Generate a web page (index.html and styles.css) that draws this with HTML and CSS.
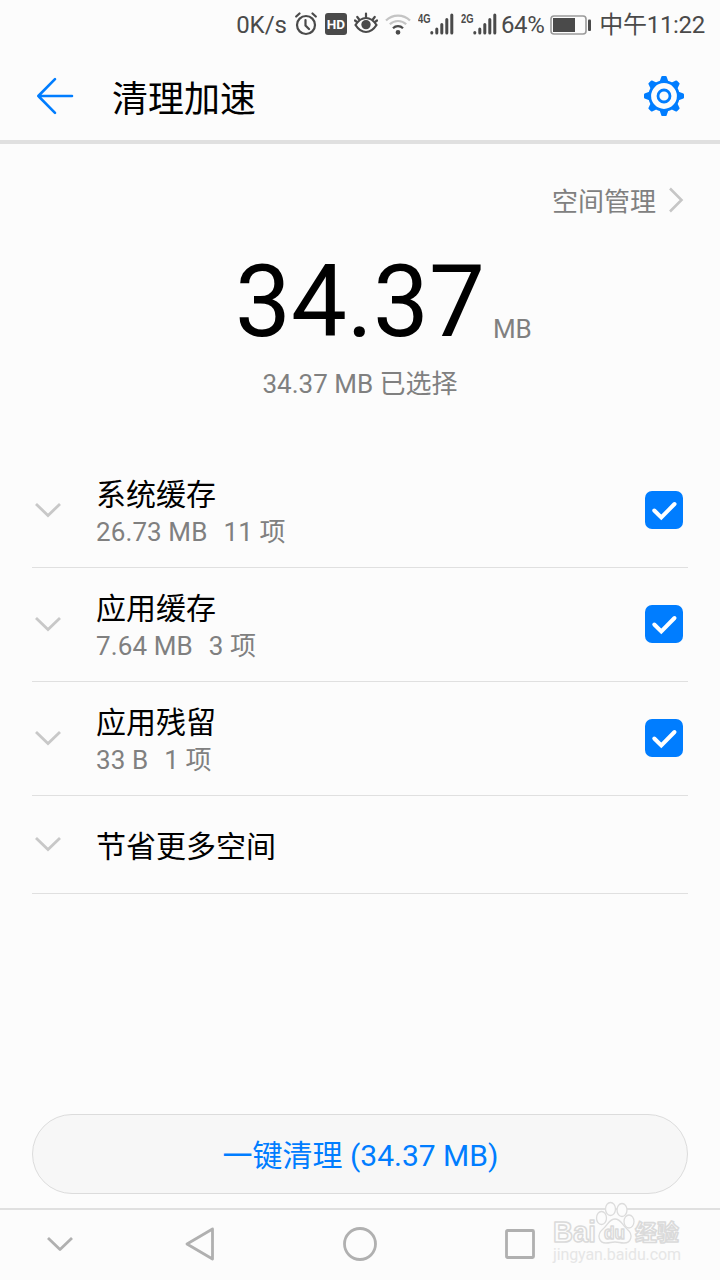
FILE: index.html
```html
<!DOCTYPE html>
<html lang="zh-CN">
<head>
    <meta charset="UTF-8">
    <meta name="viewport" content="width=device-width, initial-scale=1.0">
    <title>清理加速</title>
    <link rel="stylesheet" href="styles.css">
</head>
<body>
    <!-- Status bar -->
    <div class="status-bar">
        <span class="speed">0K/s</span>
        <svg class="icon-alarm" width="22" height="24" viewBox="0 0 22 24" fill="none" stroke="#4a4a4a" stroke-width="2.2" stroke-linecap="round">
            <circle cx="11" cy="13" r="9"/>
            <path d="M10.5 8v5.5l3.5 3.5M1.2 4.5L4.5 1.5M20.8 4.5L17.5 1.5"/>
        </svg>
        <span class="hd">HD</span>
        <svg class="icon-eye" width="24" height="22" viewBox="0 0 24 22" fill="none" stroke="#4a4a4a" stroke-width="2.2" stroke-linecap="round">
            <path d="M1.5 13Q6 6 12 6T22.5 13Q18 20 12 20T1.5 13z"/>
            <path d="M12 5.5V1.5M5.2 7.5L3.3 5M18.8 7.5L20.7 5M3 10L1 8.5M21 10L23 8.5"/>
            <circle cx="12" cy="12.6" r="3.6" fill="#4a4a4a"/>
        </svg>
        <svg class="icon-wifi" width="26" height="22" viewBox="0 0 26 22" fill="none" stroke-width="2.2">
            <path d="M1 7.5A17 17 0 0 1 25 7.5M4.8 11.3A11.8 11.8 0 0 1 21.2 11.3" stroke="#c4c4c4"/>
            <path d="M8 15.3A7 7 0 0 1 18 15.3" stroke="#4a4a4a"/>
            <circle cx="13" cy="19.3" r="1.4" stroke="#4a4a4a" fill="#4a4a4a" stroke-width="2"/>
        </svg>
        <div class="signal signal-4g">
            <span>4G</span>
            <svg width="24" height="22" viewBox="0 0 24 22" stroke="#4a4a4a" stroke-width="3" stroke-linecap="round">
                <path d="M1.8 19.5v.5M6.8 16v4M11.8 11.5v8.5M16.8 6.5v13.5M21.8 2v18"/>
            </svg>
        </div>
        <div class="signal signal-2g">
            <span>2G</span>
            <svg width="24" height="22" viewBox="0 0 24 22" stroke="#4a4a4a" stroke-width="3" stroke-linecap="round">
                <path d="M1.8 19.5v.5M6.8 16v4M11.8 11.5v8.5M16.8 6.5v13.5M21.8 2v18"/>
            </svg>
        </div>
        <span class="percent">64%</span>
        <svg class="icon-battery" width="42" height="20" viewBox="0 0 42 20">
            <rect x="1" y="1" width="35" height="18" rx="3" fill="none" stroke="#9a9a9a" stroke-width="1.6"/>
            <rect x="3" y="3" width="22" height="14" fill="#4a4a4a"/>
            <rect x="38" y="4.5" width="3" height="11.5" rx="1" fill="#4a4a4a"/>
        </svg>
        <span class="clock">中午11:22</span>
    </div>

    <!-- Header -->
    <div class="header">
        <svg width="38" height="38" viewBox="0 0 38 38" fill="none" stroke="#007dff" stroke-width="2.6" stroke-linecap="round" stroke-linejoin="round">
            <path d="M19 2.2L2.3 19L19 35.8M2.3 19H36"/>
        </svg>
        <h1>清理加速</h1>
        <svg width="40" height="40" viewBox="-20 -20 40 40" fill="none" stroke="#007dff">
            <circle r="14.3" stroke-width="2.8"/>
            <circle r="6" stroke-width="2.8"/>
            <g fill="#007dff" stroke="none">
                <path id="tooth" d="M-4.5 -14L-2.6 -19.4Q-2.3 -20 -1.6 -20H1.6Q2.3 -20 2.6 -19.4L4.5 -14z"/>
                <use href="#tooth" transform="rotate(45)"/>
                <use href="#tooth" transform="rotate(90)"/>
                <use href="#tooth" transform="rotate(135)"/>
                <use href="#tooth" transform="rotate(180)"/>
                <use href="#tooth" transform="rotate(225)"/>
                <use href="#tooth" transform="rotate(270)"/>
                <use href="#tooth" transform="rotate(315)"/>
            </g>
        </svg>
    </div>

    <div class="content">
        <div class="manage">
            <span>空间管理</span>
            <svg width="16" height="26" viewBox="0 0 16 26" fill="none" stroke="#c6c6c6" stroke-width="2.6">
                <path d="M2 1.5L13.5 13L2 24.5"/>
            </svg>
        </div>

        <div class="total">
            <span class="total-number">34.37</span>
            <span class="total-unit">MB</span>
        </div>
        <p class="selected">34.37 MB 已选择</p>

        <!-- Cache groups -->
        <div class="list">
            <div class="row">
                <svg class="chevron" viewBox="0 0 26 16"><path d="M1 2L13 13.5L25 2"/></svg>
                <div class="row-text">
                    <div class="row-title">系统缓存</div>
                    <div class="row-info"><span>26.73 MB</span><span>11 项</span></div>
                </div>
                <svg class="check" viewBox="0 0 38 38"><path d="M9.3 19.5L16.3 26.5L29.5 13"/></svg>
            </div>
            <div class="row">
                <svg class="chevron" viewBox="0 0 26 16"><path d="M1 2L13 13.5L25 2"/></svg>
                <div class="row-text">
                    <div class="row-title">应用缓存</div>
                    <div class="row-info"><span>7.64 MB</span><span>3 项</span></div>
                </div>
                <svg class="check" viewBox="0 0 38 38"><path d="M9.3 19.5L16.3 26.5L29.5 13"/></svg>
            </div>
            <div class="row">
                <svg class="chevron" viewBox="0 0 26 16"><path d="M1 2L13 13.5L25 2"/></svg>
                <div class="row-text">
                    <div class="row-title">应用残留</div>
                    <div class="row-info"><span>33 B</span><span>1 项</span></div>
                </div>
                <svg class="check" viewBox="0 0 38 38"><path d="M9.3 19.5L16.3 26.5L29.5 13"/></svg>
            </div>
            <div class="row row-single">
                <svg class="chevron" viewBox="0 0 26 16"><path d="M1 2L13 13.5L25 2"/></svg>
                <div class="row-text">
                    <div class="row-title">节省更多空间</div>
                </div>
            </div>
        </div>

        <button class="clean-btn" type="button">一键清理 (34.37 MB)</button>
    </div>

    <!-- System navigation -->
    <div class="nav-bar">
        <svg width="26" height="16" viewBox="0 0 26 16"><path d="M1 2L13 13.5L25 2"/></svg>
        <svg width="32" height="36" viewBox="0 0 32 36"><path d="M28.5 3L3 18L28.5 33z"/></svg>
        <svg width="36" height="36" viewBox="0 0 36 36"><circle cx="18" cy="18" r="15.5"/></svg>
        <svg width="32" height="32" viewBox="0 0 32 32"><rect x="2.5" y="2.5" width="27" height="27" rx="1"/></svg>
    </div>

    <!-- Watermark -->
    <svg class="watermark" width="140" height="68" viewBox="0 0 140 68">
        <g fill="#fcfcfc" stroke="#dcdcdc" stroke-width="1.3">
            <ellipse cx="58.5" cy="11" rx="5" ry="6.5"/>
            <ellipse cx="70" cy="12" rx="5" ry="6.5"/>
            <ellipse cx="49.5" cy="20" rx="5" ry="6.5"/>
            <ellipse cx="77" cy="23.5" rx="5" ry="6.5"/>
            <path d="M63 21C57 21 56 27 51 31C44 37 47 45 54 45C58 45 59 44 63 44C67 44 68 45 72 45C79 45 82 37 75 31C70 27 69 21 63 21z"/>
        </g>
        <g class="wm-text">
            <text x="1" y="44" font-size="30" textLength="43" lengthAdjust="spacingAndGlyphs">Bai</text>
            <text x="52" y="41" font-size="19" textLength="21" lengthAdjust="spacingAndGlyphs">du</text>
            <text x="83" y="42" font-size="22">经验</text>
        </g>
        <text class="wm-url" x="1" y="62" textLength="128">jingyan.baidu.com</text>
    </svg>
</body>
</html>
```
FILE: styles.css
```css
:root {
    --bg-color: #fcfcfc;
    --primary-color: #007dff;
    --text-color: #000;
    --text-secondary-color: #808080;
    --status-color: #4a4a4a;
    --border-color: #e0e0e0;
}
* { box-sizing: border-box; }
body {
    margin: 0;
    width: 720px;
    height: 1280px;
    display: flex;
    flex-direction: column;
    overflow: hidden;
    background-color: var(--bg-color);
    color: var(--text-color);
    font-family: Roboto, 'Noto Sans CJK SC', sans-serif;
}
svg { display: block; flex-shrink: 0; }

/* Status bar */
.status-bar {
    height: 48px;
    display: flex;
    align-items: center;
    justify-content: flex-end;
    padding: 2px 15px 0 0;
    color: var(--status-color);
    font-size: 24px;
    line-height: 46px;
    white-space: nowrap;
}
.speed { margin-right: 8px; }
.icon-alarm { margin-right: 8px; margin-top: -3px; }
.hd {
    width: 22px;
    height: 22px;
    margin-right: 7px;
    margin-top: -3px;
    border-radius: 3px;
    background-color: var(--status-color);
    color: #fff;
    font-size: 13.5px;
    font-weight: 700;
    line-height: 22px;
    text-align: center;
}
.icon-eye { margin-right: 7px; margin-top: -4px; }
.icon-wifi { margin-right: 7px; margin-top: -3px; }
.signal { display: flex; align-items: center; margin-top: -2px; }
.signal span {
    width: 12px;
    height: 22px;
    font-family: 'Liberation Sans', sans-serif;
    font-size: 13px;
    font-weight: 700;
    line-height: 11px;
    transform: scaleX(0.72);
    transform-origin: left;
}
.signal-4g { margin-right: 7px; }
.signal-2g { margin-right: 4px; }
.percent { margin-right: 6px; letter-spacing: -0.4px; }
.icon-battery { margin-right: 7px; }
.clock { letter-spacing: -0.3px; }

/* Header */
.header {
    height: 96px;
    display: flex;
    align-items: center;
    padding: 4px 36px 0;
    border-bottom: 4px solid var(--border-color);
}
.header h1 {
    flex: 1;
    margin: 8px 0 0 38px;
    font-size: 36px;
    font-weight: 400;
    line-height: 52px;
}

.content {
    flex: 1;
    display: flex;
    flex-direction: column;
    padding: 0 32px 14px;
}
.manage {
    display: flex;
    align-items: center;
    justify-content: flex-end;
    gap: 12px;
    margin-top: 37px;
    padding-right: 4px;
    height: 38px;
    color: var(--text-secondary-color);
    font-size: 26px;
}
.manage span { margin-top: -1px; }
.total {
    display: flex;
    align-items: baseline;
    margin-top: 25px;
    padding-left: 203px;
    height: 117px;
}
.total-number { font-size: 99.5px; line-height: 117px; }
.total-unit {
    margin: 0 0 0 8px;
    font-size: 26px;
    line-height: 30px;
    color: var(--text-secondary-color);
    transform: translateY(2px);
}
.selected {
    margin: 4px 0 0;
    font-size: 26px;
    line-height: 38px;
    text-align: center;
    color: var(--text-secondary-color);
}

/* List */
.list { margin-top: 51px; }
.row {
    height: 114px;
    display: flex;
    align-items: center;
    padding: 0 5px 2px 3px;
    border-bottom: 1px solid var(--border-color);
}
.row-text { flex: 1; margin: 6px 0 0 35px; }
.row-title { font-size: 30px; line-height: 40px; }
.row-info {
    display: flex;
    gap: 16px;
    margin: -1px 0 1px;
    font-size: 26px;
    line-height: 36px;
    letter-spacing: 0.1px;
    color: var(--text-secondary-color);
}
.row-single { height: 98px; }
.chevron {
    width: 26px;
    height: 16px;
    fill: none;
    stroke: #c8c8c8;
    stroke-width: 2.8;
}
.check {
    width: 38px;
    height: 38px;
    border-radius: 7px;
    background-color: var(--primary-color);
    fill: none;
    stroke: #fff;
    stroke-width: 4;
    stroke-linecap: round;
}
.clean-btn {
    height: 80px;
    margin-top: auto;
    padding: 0 0 3px 1px;
    border: 1px solid #dcdcdc;
    border-radius: 40px;
    background-color: #f7f7f7;
    color: var(--primary-color);
    font-family: inherit;
    font-size: 30px;
}

/* Navigation bar */
.nav-bar {
    height: 72px;
    display: grid;
    grid-template-columns: 120px repeat(3, 160px);
    justify-items: center;
    align-items: center;
    padding-bottom: 2px;
    border-top: 2px solid var(--border-color);
}
.nav-bar svg {
    fill: none;
    stroke: #b0b0b0;
    stroke-width: 2.8;
    stroke-linejoin: round;
}

.watermark { position: absolute; left: 552px; top: 1198px; }
.wm-text {
    fill: #fcfcfc;
    stroke: #dadada;
    stroke-width: 1.6;
    stroke-linejoin: round;
    font-family: 'Liberation Sans', 'Noto Sans CJK SC', sans-serif;
    font-weight: 700;
}
.wm-url { fill: #e6e6e6; font-size: 16px; }
```
